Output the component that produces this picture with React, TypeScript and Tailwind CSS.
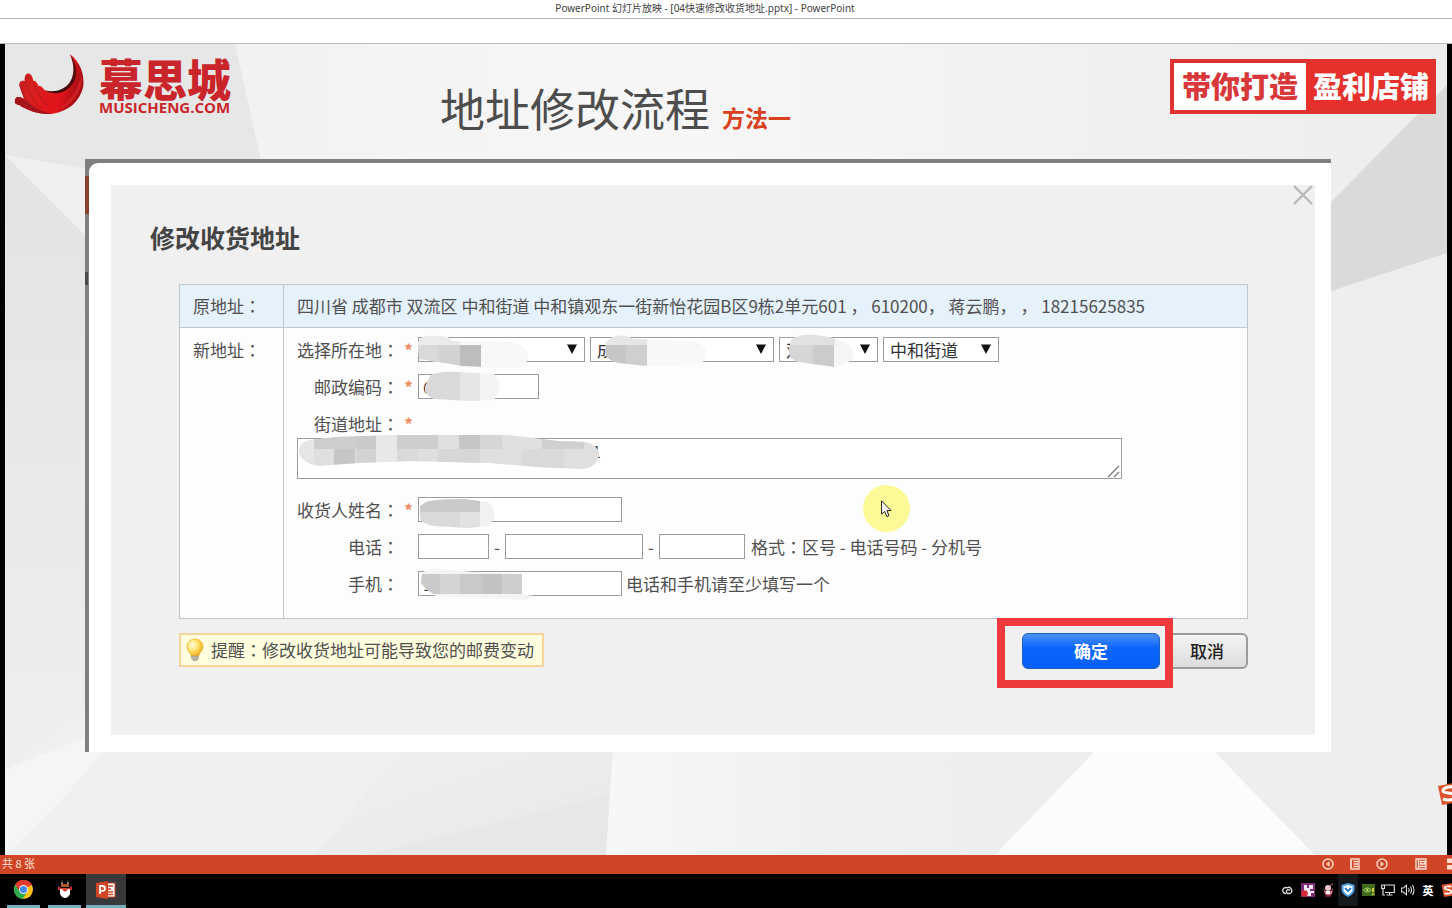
import React from "react";

const cjk = "font-['Noto_Sans_CJK_SC',sans-serif]";

function SlideBackground() {
  return (
    <svg
      className="absolute inset-0 h-full w-full"
      viewBox="5 44 1442 811"
      preserveAspectRatio="none"
      aria-hidden="true"
    >
      <defs>
        <linearGradient id="bgTop" x1="0" x2="1" y1="0" y2="0">
          <stop offset="0" stopColor="#efefef" />
          <stop offset="0.45" stopColor="#f7f7f7" />
          <stop offset="0.8" stopColor="#f0f0f0" />
          <stop offset="1" stopColor="#eeeeee" />
        </linearGradient>
        <linearGradient id="bgLeft" x1="0" x2="0" y1="0" y2="1">
          <stop offset="0" stopColor="#e3e3e3" />
          <stop offset="1" stopColor="#efefef" />
        </linearGradient>
        <linearGradient id="bgShade" x1="0" x2="1" y1="0" y2="1">
          <stop offset="0" stopColor="#f0f0f0" />
          <stop offset="1" stopColor="#e8e8e8" />
        </linearGradient>
        <linearGradient id="bgMid" x1="0" x2="1" y1="0" y2="0">
          <stop offset="0" stopColor="#f7f7f7" />
          <stop offset="0.4" stopColor="#f1f1f1" />
          <stop offset="1" stopColor="#ededed" />
        </linearGradient>
      </defs>
      <rect x="5" y="44" width="1442" height="811" fill="url(#bgTop)" />
      <polygon points="5,44 235,44 262,165 90,170 5,155" fill="#e7e7e7" />
      <polygon points="5,155 90,240 90,705 5,770" fill="url(#bgLeft)" />
      <polygon points="5,155 90,170 90,240" fill="#f0f0f0" />
      <polygon points="5,770 90,735 110,751 8,855 5,855" fill="#f5f5f5" />
      <polygon points="104,751 400,751 315,855 14,855" fill="#f0f0f0" />
      <polygon points="400,751 613,751 606,855 315,855" fill="url(#bgShade)" />
      <polygon points="610,795 606,855 365,855" fill="#e7e7e7" />
      <polygon points="613,751 1095,751 995,855 606,855" fill="url(#bgMid)" />
      <polygon points="995,855 1095,751 1214,751 1315,855" fill="#fcfcfc" />
      <polygon points="1214,751 1331,291 1447,253 1447,855 1315,855" fill="#eeeeee" />
      <polygon points="1331,202 1447,85 1447,253 1331,291" fill="#dadada" />
    </svg>
  );
}

function Logo() {
  return (
    <div className="flex items-start">
      <svg className="h-[64px] w-[72px]" viewBox="42 40 216 192" role="img" aria-label="Musicheng">
        <defs>
          <linearGradient id="lg" x1="0" x2="1" y1="0" y2="0.3">
            <stop offset="0" stopColor="#b3161b" />
            <stop offset="0.4" stopColor="#d9201f" />
            <stop offset="0.8" stopColor="#e2131a" />
            <stop offset="1" stopColor="#a80f15" />
          </linearGradient>
          <linearGradient id="lg2" x1="0" x2="0" y1="0" y2="1">
            <stop offset="0" stopColor="#7a1014" />
            <stop offset="1" stopColor="#3d0508" />
          </linearGradient>
        </defs>
        <path d="M46 178 C42 190 46 194 58 196 C84 214 122 226 158 222 C205 216 240 186 250 140 C254 104 240 66 210 44 C228 80 226 112 210 132 C190 156 160 164 134 152 C126 140 120 138 116 140 C110 124 102 122 100 124 C96 100 84 98 77 106 C73 112 74 120 74 124 C64 120 56 128 58 138 L72 178 C62 172 50 168 46 178 Z" fill="url(#lg)" />
        <path d="M210 44 C234 76 236 112 214 138 C190 164 160 166 134 152 C166 160 192 150 208 130 C224 108 224 78 210 44 Z" fill="url(#lg2)" />
        <path d="M46 178 C42 190 46 194 58 196 C84 214 122 226 158 222 C130 218 96 204 72 178 C62 172 50 168 46 178 Z" fill="#a3151a" />
        <path d="M62 142 C68 166 80 186 100 202 M78 128 C86 156 98 184 124 206 M102 132 C108 152 122 178 146 200" fill="none" stroke="#b3191d" strokeWidth="3" />
        <path d="M244 106 C250 150 222 196 168 212 C206 192 232 156 244 106 Z" fill="#f0322f" opacity="0.5" />
      </svg>
      <div className="ml-[13px] flex flex-col text-[#c9252b]">
        <span className={`mt-[3px] text-[44px] leading-[44px] font-black ${cjk}`}>幕思城</span>
        <span className="font-['Open_Sans',sans-serif] text-[15px] leading-[15px] font-bold">MUSICHENG.COM</span>
      </div>
    </div>
  );
}

function Label({ htmlFor, children, required }: { htmlFor: string; children: string; required?: boolean }) {
  return (
    <>
      <label htmlFor={htmlFor} className="w-[102px] shrink-0 text-right whitespace-nowrap">
        {children}
        <Colon />
      </label>
      <span className="w-[19px] shrink-0 text-center font-bold text-[#f08a60]">{required ? "*" : ""}</span>
    </>
  );
}

function Colon() {
  return <span className="font-['Noto_Sans_CJK_TC',sans-serif]">：</span>;
}

type Block = [number, number, number, number, string];

/* Soft mosaic smear laid over private field values. */
function Mosaic({ id, w, h, shape, blocks, className }: { id: string; w: number; h: number; shape: string; blocks: Block[]; className: string }) {
  return (
    <svg
      className={`pointer-events-none absolute ${className}`}
      width={w}
      height={h}
      viewBox={`0 0 ${w} ${h}`}
      aria-hidden="true"
    >
      <clipPath id={id}>
        <path d={shape} />
      </clipPath>
      <g clipPath={`url(#${id})`}>
        {blocks.map(([x, y, bw, bh, fill], i) => (
          <rect key={i} x={x} y={y} width={bw} height={bh} fill={fill} />
        ))}
      </g>
    </svg>
  );
}

function Select({ id, value, width, label, children }: { id: string; value: string; width: string; label: string; children?: React.ReactNode }) {
  return (
    <div className={`relative shrink-0 ${width}`}>
      <select
        id={id}
        aria-label={label}
        className="block h-[25px] w-full appearance-none border border-[#9c9c9c] bg-white pl-[6px] text-[17px] leading-[22px] text-[#333]"
      >
        <option>{value}</option>
      </select>
      <svg className="pointer-events-none absolute top-[7px] right-[8px]" width="10" height="10" viewBox="0 0 10 10" aria-hidden="true">
        <path d="M0 0.5H10L5 10Z" fill="#111" />
      </svg>
      {children}
    </div>
  );
}

const field = "h-[25px] shrink-0 border border-[#9c9c9c] bg-white px-[4px] text-[17px] text-[#333]";

function AddressTable() {
  return (
    <table className="w-full border-collapse text-[17px] leading-[25px] text-[#505050]">
      <tbody>
        <tr className="bg-[#e5f1fb]">
          <th scope="row" className="h-[43px] w-[104px] border border-[#c2c6ca] pb-[2px] pl-[13px] text-left font-normal whitespace-nowrap">
            原地址<Colon />
          </th>
          <td className="border border-[#c2c6ca] pb-[2px] pl-[13px]">
            四川省 成都市 双流区 中和街道 中和镇观东一街新怡花园B区9栋2单元601 ， 610200， 蒋云鹏， ， 18215625835
          </td>
        </tr>
        <tr className="bg-[#fdfdfd]">
          <th scope="row" className="border border-[#c2c6ca] pt-[9px] pl-[13px] text-left align-top font-normal whitespace-nowrap">
            新地址<Colon />
          </th>
          <td className="border border-[#c2c6ca] pt-[9px] pb-[22px] pl-[13px]">
            <div className="relative flex flex-col">
              <div className="flex flex-col gap-[12px]">
                <div className="flex items-center">
                  <Label htmlFor="province" required>选择所在地</Label>
                  <div className="flex gap-[5px]">
                    <Select id="province" value=" " width="w-[167px]" label="省">
                      <Mosaic
                        id="m1" w={112} h={36} className="-top-[3px] left-0"
                        shape="M0 8 Q4 0 20 2 Q32 2 34 7 L94 8 Q110 12 110 24 Q108 34 92 34 L44 32 L20 28 L1 25 Z"
                        blocks={[[0, 0, 112, 36, "#f8f8f8"], [0, 0, 42, 11, "#ebebeb"], [0, 11, 20, 24, "#d9d9d9"], [20, 11, 22, 24, "#d2d2d2"], [42, 11, 21, 24, "#bdbdbd"]]}
                      />
                    </Select>
                    <Select id="city" value="成都市" width="w-[184px]" label="市">
                      <Mosaic
                        id="m2" w={120} h={36} className="-top-[3px] left-0"
                        shape="M16 8 Q24 0 36 2 L44 5 L104 7 Q116 10 117 22 Q114 32 98 31 L57 32 L28 29 Q16 26 15 18 Z"
                        blocks={[[0, 0, 120, 36, "#f8f8f8"], [0, 0, 57, 11, "#e6e6e6"], [14, 11, 22, 24, "#c6c6c6"], [36, 11, 21, 24, "#cfcfcf"]]}
                      />
                    </Select>
                    <Select id="district" value="双流区" width="w-[99px]" label="区">
                      <Mosaic
                        id="m3" w={76} h={36} className="-top-[3px] left-0"
                        shape="M12 6 Q20 0 36 1 L50 3 L66 8 Q76 14 74 24 L68 29 L55 33 L20 28 Q10 26 10 17 Z"
                        blocks={[[0, 0, 76, 36, "#f5f5f5"], [0, 0, 56, 11, "#e1e1e1"], [0, 11, 34, 24, "#d6d6d6"], [34, 11, 21, 24, "#cbcbcb"]]}
                      />
                    </Select>
                    <Select id="street" value="中和街道" width="w-[116px]" label="街道" />
                  </div>
                </div>
                <div className="flex items-center">
                  <Label htmlFor="zip" required>邮政编码</Label>
                  <div className="relative flex">
                    <input id="zip" defaultValue="610200" className={`${field} w-[121px]`} />
                    <Mosaic
                      id="m4" w={84} h={32} className="-top-[3px] left-0"
                      shape="M12 5 Q20 0 38 1 L76 3 Q84 12 80 22 L76 29 L52 30 L18 28 Q6 26 7 16 Z"
                      blocks={[[0, 0, 84, 32, "#f4f4f4"], [0, 0, 42, 32, "#d9d9d9"], [42, 0, 20, 32, "#e6e6e6"]]}
                    />
                  </div>
                </div>
                <div className="flex items-center">
                  <Label htmlFor="address" required>街道地址</Label>
                </div>
              </div>
              <div className="relative mt-[2px]">
                <textarea
                  id="address"
                  defaultValue="中和镇观东一街新怡花园B区9栋2单元601"
                  className="block h-[41px] w-[825px] max-w-full resize-none border border-[#9c9c9c] bg-white px-[8px] text-[16px] leading-[24px] text-[#333]"
                />
                <svg className="pointer-events-none absolute top-[27px] left-[810px]" width="13" height="13" viewBox="0 0 13 13" aria-hidden="true">
                  <path d="M1 12L12 1M7 12L12 7" stroke="#777" strokeWidth="1.3" />
                </svg>
                <Mosaic
                  id="m5" w={304} h={36} className="-top-[4px] left-[1px]"
                  shape="M12 6 L38 3 L100 1 L210 1 L260 7 L288 8 Q302 12 301 22 Q298 34 284 35 L240 33 L190 29 L110 27 L60 29 L20 32 Q2 28 1 17 Q2 8 12 6 Z"
                  blocks={[
                    [0, 0, 304, 36, "#dfdfdf"], [0, 0, 16, 36, "#e6e6e6"], [16, 0, 42, 15, "#cdcdcd"], [36, 15, 21, 20, "#c6c6c6"],
                    [58, 0, 20, 15, "#c9c9c9"], [58, 15, 20, 20, "#d3d3d3"], [78, 0, 21, 36, "#e8e8e8"], [99, 0, 41, 15, "#cecece"],
                    [99, 15, 21, 20, "#dadada"], [161, 0, 21, 15, "#c6c6c6"], [140, 15, 42, 20, "#d6d6d6"], [182, 0, 22, 15, "#d6d6d6"],
                    [244, 0, 42, 15, "#d0d0d0"], [224, 15, 42, 20, "#d9d9d9"],
                  ]}
                />
              </div>
              <div className="mt-[18px] flex flex-col gap-[12px]">
                <div className="flex items-center">
                  <Label htmlFor="name" required>收货人姓名</Label>
                  <div className="relative flex">
                    <input id="name" defaultValue="蒋" className={`${field} w-[204px]`} />
                    <Mosaic
                      id="m6" w={78} h={32} className="top-[1px] left-0"
                      shape="M8 4 Q16 1 46 1 L70 4 Q78 10 76 20 L70 28 L50 30 L16 28 Q4 26 2 20 L2 8 Z"
                      blocks={[[0, 0, 78, 32, "#f1f1f1"], [0, 0, 62, 14, "#cacaca"], [0, 14, 42, 18, "#d9d9d9"], [42, 14, 20, 18, "#e2e2e2"]]}
                    />
                  </div>
                </div>
                <div className="flex items-center">
                  <Label htmlFor="phone">电话</Label>
                  <input id="phone" aria-label="区号" className={`${field} w-[71px]`} />
                  <span className="w-4 text-center">-</span>
                  <input aria-label="电话号码" className={`${field} w-[138px]`} />
                  <span className="w-4 text-center">-</span>
                  <input aria-label="分机号" className={`${field} w-[86px]`} />
                  <span className="ml-[6px] whitespace-nowrap">格式<Colon />区号 - 电话号码 - 分机号</span>
                </div>
                <div className="flex items-center">
                  <Label htmlFor="mobile">手机</Label>
                  <div className="relative flex">
                    <input id="mobile" defaultValue="1" className={`${field} w-[204px]`} />
                    <Mosaic
                      id="m7" w={118} h={34} className="-top-[4px] left-0"
                      shape="M4 6 Q12 0 24 2 L56 5 L104 7 L104 27 L116 29 L108 33 L18 29 L8 22 L3 16 Z"
                      blocks={[[0, 0, 118, 34, "#f4f4f4"], [0, 7, 22, 20, "#cacaca"], [22, 7, 20, 20, "#d4d4d4"], [42, 7, 22, 20, "#c9c9c9"], [64, 7, 20, 20, "#c2c2c2"], [84, 7, 20, 20, "#cecece"]]}
                    />
                  </div>
                  <span className="ml-[4px] whitespace-nowrap">电话和手机请至少填写一个</span>
                </div>
              </div>
              <div className="absolute top-[148px] left-[566px] flex h-[47px] w-[47px] rounded-full bg-[#fbfa96]">
                <svg className="mt-[15px] ml-[18px]" width="11" height="18" viewBox="0 0 11 18" aria-hidden="true">
                  <path d="M0.6 0.8V14.2L3.6 11.4L5.8 16.6L8 15.6L5.9 10.6H10Z" fill="#fff" stroke="#222" strokeWidth="1" />
                </svg>
              </div>
            </div>
          </td>
        </tr>
      </tbody>
    </table>
  );
}

function Bulb() {
  return (
    <svg width="18" height="24" viewBox="0 0 18 24" aria-hidden="true">
      <defs>
        <radialGradient id="bulb" cx="0.35" cy="0.35" r="0.7">
          <stop offset="0" stopColor="#fffbe0" />
          <stop offset="0.5" stopColor="#ffe36a" />
          <stop offset="1" stopColor="#f2a916" />
        </radialGradient>
      </defs>
      <path d="M9 1C4.300 1 1 4.500 1 8.700C1 12.500 4 14 5.500 18H12.500C14 14 17 12.500 17 8.700C17 4.500 13.700 1 9 1Z" fill="url(#bulb)" stroke="#e8b23a" strokeWidth="0.8" />
      <path d="M5.500 18H12.500V20.500L11 22.500H7L5.500 20.500Z" fill="#b9b2a4" stroke="#8f8878" strokeWidth="0.5" />
    </svg>
  );
}

function Dialog() {
  return (
    <section className="relative mr-[116px] ml-[80px] bg-[#7f7f7f] pt-[4px] pl-[4px]" aria-labelledby="dlg">
      <span className="absolute top-[17px] left-0 h-[38px] w-[5px] bg-[#8a4030]" />
      <span className="absolute top-[113px] left-0 h-[13px] w-[3px] bg-[#4a4a4a]" />
      <div className="relative rounded-tl-[9px] bg-white pt-[22px] pr-[16px] pb-[17px] pl-[22px]">
        <div className="relative bg-[#f0f0f0] pt-[35px] pr-[67px] pb-[66px] pl-[68px]">
          <button type="button" aria-label="关闭" className="absolute top-0 right-0 h-[20px] w-[22px]">
            <svg width="20" height="20" viewBox="0 0 20 20" aria-hidden="true">
              <path d="M1 1L19 19M19 1L1 19" stroke="#b9b9b9" strokeWidth="2.4" />
            </svg>
          </button>
          <h2 id="dlg" className="mb-[29px] -ml-[29px] text-[25px] leading-[35px] font-bold text-[#444]">修改收货地址</h2>
          <AddressTable />
          <div className="mt-[14px] flex items-start justify-between">
            <p className="flex h-[34px] items-center gap-[7px] border-2 border-[#f5d59b] bg-[#fffedf] pr-[8px] pl-[5px] text-[17px] text-[#505050]">
              <Bulb />
              <span>提醒<Colon />修改收货地址可能导致您的邮费变动</span>
            </p>
            <div className="flex gap-[6px]">
              <div className="relative z-10">
                <button type="button" className="block h-[36px] w-[138px] rounded-[6px] border border-[#1f5fc0] bg-linear-to-b from-[#4a90f5] via-[#0a66fb] via-40% to-[#0560fa] text-[17px] font-bold text-white">
                  确定
                </button>
                <div className="pointer-events-none absolute -top-[15px] -right-[13px] -bottom-[19px] -left-[25px] border-8 border-[#ee3a3c]" />
              </div>
              <button type="button" className="block h-[36px] w-[82px] rounded-[6px] border-2 border-[#9b9b9b] bg-linear-to-b from-[#f4f4f4] to-[#dcdcdc] text-[17px] font-medium text-[#222]">
                取消
              </button>
            </div>
          </div>
        </div>
      </div>
    </section>
  );
}

function SogouMark() {
  return (
    <svg width="22" height="24" viewBox="0 0 22 24" aria-hidden="true">
      <path d="M0 4L20 0L22 20L4 23Z" fill="#d9542b" />
      <path d="M17 5C10 4 5 6 5 9C5 12 17 10 17 14C17 18 10 19 5 17" fill="none" stroke="#fff" strokeWidth="3" />
    </svg>
  );
}

function StatusBar() {
  const s = { fill: "none", stroke: "#fbdccf", strokeWidth: 1.4 };
  return (
    <div className="relative flex h-[19px] items-center justify-between overflow-hidden bg-[#d04526] pl-[2px] text-[11px] leading-[15px] text-[#fbe6dd]">
      <span className="pb-[2px]">共 8 张</span>
      <div className="-mr-[7px] flex items-center pb-[1px]">
        <button type="button" aria-label="上一张" className="mr-[15px]">
          <svg width="12" height="12" viewBox="0 0 12 12"><circle cx="6" cy="6" r="5" {...s} /><path d="M7.500 3.200V8.800L4 6Z" fill="#fbdccf" /></svg>
        </button>
        <button type="button" aria-label="菜单" className="mr-[15px]">
          <svg width="12" height="12" viewBox="0 0 12 12"><path d="M2 1H10V11H2ZM4.500 3.500H9M4.500 6H9M4.500 8.500H9M1 3.500H3M1 6H3M1 8.500H3" {...s} /></svg>
        </button>
        <button type="button" aria-label="下一张" className="mr-[27px]">
          <svg width="12" height="12" viewBox="0 0 12 12"><circle cx="6" cy="6" r="5" {...s} /><path d="M4.500 3.200V8.800L8 6Z" fill="#fbdccf" /></svg>
        </button>
        <button type="button" aria-label="普通视图" className="mr-[20px]">
          <svg width="12" height="12" viewBox="0 0 12 12"><path d="M1 1H11V11H1ZM3.500 1V11M5.500 3.500H9.500V6H5.500ZM3.500 8.500H11" {...s} /></svg>
        </button>
        <button type="button" aria-label="浏览视图">
          <svg width="12" height="12" viewBox="0 0 12 12"><path d="M0 0.500H5V5H0ZM7 0.500H12V5H7ZM0 7H5V11.500H0ZM7 7H12V11.500H7Z" fill="#fbdccf" /></svg>
        </button>
      </div>
    </div>
  );
}

function Taskbar() {
  const tray = "flex h-full w-5 items-center justify-center";
  return (
    <footer className="flex h-[34px] justify-between overflow-hidden bg-black pl-[7px]">
      <div className="flex">
        <button type="button" aria-label="Chrome" className="mr-[8px] flex w-[33px] items-center justify-center border-b-[3px] border-[#76aebd]">
          <svg width="19" height="19" viewBox="0 0 20 20" aria-hidden="true">
            <circle cx="10" cy="10" r="10" fill="#fbc116" />
            <path d="M10 10L1.340 5A10 10 0 0 1 18.660 5Z" fill="#e33b2e" />
            <path d="M10 5.500H18.930A10 10 0 0 0 1.340 5L6 12.500Z" fill="#e33b2e" />
            <path d="M1.340 5A10 10 0 0 0 9.200 19.970L13.700 12.300L6.100 12.200Z" fill="#2da94f" />
            <circle cx="10" cy="10" r="4.700" fill="#f4f4f4" />
            <circle cx="10" cy="10" r="3.700" fill="#4587f3" />
          </svg>
        </button>
        <button type="button" aria-label="千牛" className="mr-[5px] flex w-[33px] items-center justify-center border-b-[3px] border-[#76aebd]">
          <svg width="16" height="19" viewBox="0 0 16 19" aria-hidden="true">
            <path d="M5 0L6 4H10L11 0L12 5H4Z" fill="#c9b39a" />
            <rect x="4" y="4" width="8" height="3" fill="#b0562f" />
            <path d="M1 6L4 8H12L15 6V10L12 11H4L1 10Z" fill="#c32b28" />
            <path d="M3 9H13V14Q11 18 8 18Q5 18 3 14Z" fill="#fff" />
            <path d="M4 8H12L9 11.500H7Z" fill="#d8433a" />
          </svg>
        </button>
        <button type="button" aria-label="PowerPoint" className="flex w-10 items-center justify-center border-b-[3px] border-[#76aebd] bg-[#38393b]">
          <svg width="20" height="18" viewBox="0 0 20 18" aria-hidden="true">
            <rect x="10" y="2" width="9" height="14" fill="#fff" stroke="#d04526" />
            <path d="M12 5H17M12 8H15M12 11H17M12 13.500H17" stroke="#d04526" strokeWidth="1.300" />
            <path d="M0 2L12 0V18L0 16Z" fill="#d04526" />
            <path d="M4 13V5H6.500A2.300 2.300 0 0 1 6.500 9.800H4" fill="none" stroke="#fff" strokeWidth="1.800" />
          </svg>
        </button>
      </div>
      <div className="-mr-[6px] flex h-[32px] items-center text-white">
        <span className={tray}>
          <svg width="12" height="9" viewBox="0 0 12 9"><path d="M4 7.500A3 3 0 1 1 5 1.800A3.200 3.200 0 1 1 8 7.500H5.500A2 2 0 1 1 8 4.500" fill="none" stroke="#ddd" strokeWidth="1.300" /></svg>
        </span>
        <span className={tray}>
          <svg width="14" height="14" viewBox="0 0 14 14"><rect width="14" height="14" fill="#7a2f78" /><path d="M3 2H6V5H8V2H12V6H9V8H13V10H10V13H6V8H3Z" fill="#f3e8f3" /><circle cx="3.500" cy="10.500" r="3.300" fill="#d9283a" /></svg>
        </span>
        <span className={tray}>
          <svg width="12" height="14" viewBox="0 0 12 14"><path d="M8 3L11 0.500" stroke="#e77" /><circle cx="6" cy="5" r="3" fill="#f3c3d0" /><path d="M1 4L3 8H9L11 5L10 11Q6 14 3 11Z" fill="#e8698c" /><path d="M4 8H8V11H4Z" fill="#fff" /><path d="M3 13H9" stroke="#c33" /></svg>
        </span>
        <span className={`${tray} bg-[#15181c]`}>
          <svg width="14" height="14" viewBox="0 0 14 14"><path d="M7 0L13.500 2V6.500Q13 11 7 14Q1 11 0.500 6.500V2Z" fill="#4fa3ee" /><path d="M7 2L11.500 3.400V6.500Q11 9.800 7 12Q3 9.800 2.500 6.500V3.400Z" fill="#fff" /><path d="M4 5L7 8L10 5" fill="none" stroke="#2476d2" strokeWidth="1.800" /></svg>
        </span>
        <span className={tray}>
          <svg width="13" height="12" viewBox="0 0 13 12"><rect width="13" height="12" fill="#3f6b1d" /><path d="M1.500 6Q5 2 9 6Q5 10 1.500 6Z" fill="none" stroke="#a9d46a" /><circle cx="5.200" cy="6" r="1.200" fill="#a9d46a" /><path d="M11 4V8M11 9.500V11" stroke="#ffe14a" strokeWidth="1.600" /></svg>
        </span>
        <span className={tray}>
          <svg width="14" height="12" viewBox="0 0 14 12"><path d="M4 1H13.300V8.500H4M8.500 8.500V11M5.500 11H11.500M0.700 1H3.500V4.500H0.700ZM2 4.500V11H4" fill="none" stroke="#ddd" strokeWidth="1.200" /></svg>
        </span>
        <span className={tray}>
          <svg width="14" height="12" viewBox="0 0 14 12"><path d="M0.600 4H2.500L5.500 1.200V10.800L2.500 8H0.600ZM7.500 4Q8.800 6 7.500 8M9.500 2.500Q11.500 6 9.500 9.500M11.500 1Q14.500 6 11.500 11" fill="none" stroke="#ddd" strokeWidth="1.100" /></svg>
        </span>
        <span className={`${tray} text-[11px] font-bold`}>英</span>
        <span className={tray}>
          <svg width="14" height="14" viewBox="0 0 22 24"><path d="M0 3L20 0L22 21L4 24Z" fill="#e2552b" /><path d="M17 6C10 5 5 6 5 9C5 12 17 11 17 15C17 18 10 19 5 18" fill="none" stroke="#fff" strokeWidth="3" /></svg>
        </span>
      </div>
    </footer>
  );
}

export default function App() {
  return (
    <div className={`flex min-h-screen flex-col overflow-x-hidden bg-white ${cjk}`}>
      <header className="h-[19px] border-b border-[#b8b8b8] pr-[42px] text-center font-['Noto_Sans','Noto_Sans_CJK_SC',sans-serif] text-[10px] leading-[17px] whitespace-pre text-[#444]">
        PowerPoint 幻灯片放映 - [04快速修改收货地址.pptx] - PowerPoint
      </header>
      <div className="h-[25px] border-b border-[#bdbdbd]" />
      <main className="relative flex-1 border-x-[5px] border-black bg-[#f0f0f0]">
        <SlideBackground />
        <div className="relative pb-[103px]">
          <div className="flex h-[115px] items-start pt-[9px] pr-[11px] pl-[9px]">
            <Logo />
            <h1 className="mt-[22px] ml-[209px] flex items-baseline gap-[12px] text-[45px] leading-[66px] font-normal whitespace-nowrap text-[#4d4d4d]">
              地址修改流程
              <small className="text-[23px] font-bold text-[#d9401c]">方法一</small>
            </h1>
            <div className="mt-[6px] ml-auto flex h-[55px] shrink-0 border-4 border-[#e0322f] bg-[#e5302c] text-[29px] leading-[45px] font-black">
              <span className="bg-white px-[8px] text-[#d8383a]">带你打造</span>
              <span className="pr-[3px] pl-[7px] text-white">盈利店铺</span>
            </div>
          </div>
          <Dialog />
        </div>
        <div className="absolute right-[-13px] bottom-[49px]">
          <SogouMark />
        </div>
      </main>
      <StatusBar />
      <Taskbar />
    </div>
  );
}
